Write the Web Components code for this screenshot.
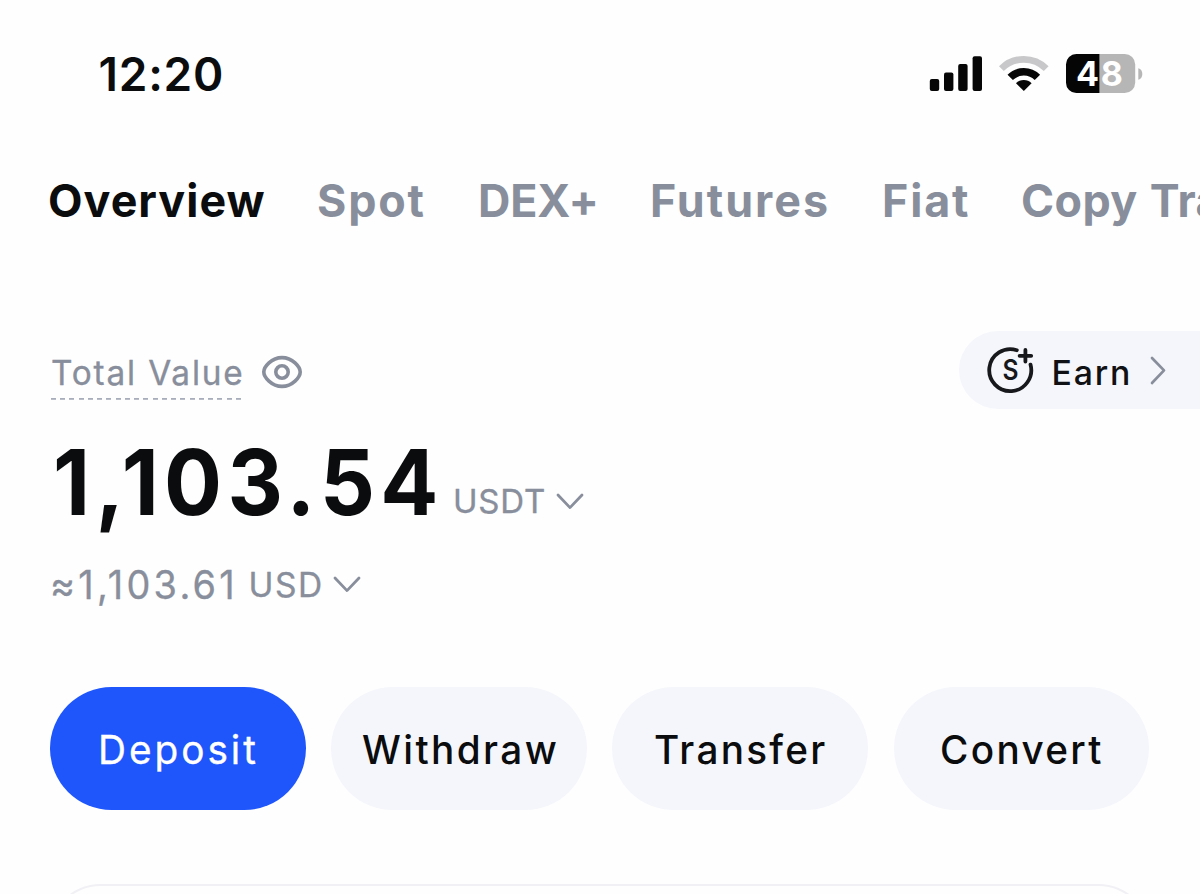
<!DOCTYPE html>
<html lang="en">
<head>
<meta charset="utf-8">
<title>Wallet overview</title>
<style>
html,body{margin:0;height:100%;overflow:hidden;background:#fefefe}
body{font-family:Inter,"Liberation Sans",sans-serif;color:#0b0c0e}
</style>
</head>
<body>
<wallet-app></wallet-app>
<script>
const define=(name,html,setup)=>{
  const tpl=document.createElement('template');
  tpl.innerHTML=html;
  customElements.define(name,class extends HTMLElement{
    connectedCallback(){
      if(this.shadowRoot)return;
      this.attachShadow({mode:'open'}).append(tpl.content.cloneNode(true));
      if(setup)setup(this,this.shadowRoot);
    }
  });
};
const ctx=document.createElement('canvas').getContext('2d');

/* One line of type: size, weight and horizontal scale, tracked so its ink spans the given width. */
define('type-line',`<style>
:host{display:block;flex:none;white-space:nowrap;line-height:1}
:host([firm]){-webkit-text-stroke:.35px currentColor}
span{display:block;width:max-content;transform-origin:0 0}
</style><span><slot></slot></span>`,(el,root)=>{
  const size=+el.getAttribute('size'),weight=el.getAttribute('weight')||400,text=el.textContent;
  const sx=+el.getAttribute('stretch')||1;
  const span=root.querySelector('span');
  el.style.cssText+=`;font-size:${size}px;font-weight:${weight};height:${size}px`;
  ctx.font=`${weight} ${size}px Inter`;
  const m=ctx.measureText(text);
  const ink=m.actualBoundingBoxLeft+m.actualBoundingBoxRight;
  const fit=el.getAttribute('fit');
  const track=fit?(fit/sx-ink)/Math.max(1,text.length-1):+el.getAttribute('track')||0;
  if(fit)el.style.width=fit+'px';
  span.style.letterSpacing=track+'px';
  span.style.marginLeft=m.actualBoundingBoxLeft*sx+'px';
  if(sx!==1)span.style.transform=`scaleX(${sx})`;
});

define('signal-icons',`<style>
:host{display:block;width:214px;height:40px}svg{display:block}text{font:700 34px Inter,sans-serif;fill:#fff}
</style>
<svg width="214" height="40" viewBox="929 54 214 40">
<g fill="#060606"><rect x="929.8" y="79" width="9.4" height="12" rx="2"/><rect x="944" y="72.6" width="9.4" height="18.4" rx="2"/><rect x="958.2" y="64" width="9.4" height="27" rx="2"/><rect x="972.6" y="56.2" width="9.4" height="34.8" rx="2"/></g>
<g fill="none" transform="translate(1023.8 91)"><path d="M-22.4-22.4A31.7 31.7 0 0 1 22.4-22.4" stroke="#c8c8ca" stroke-width="6.8"/><path d="M-13.6-13.6A19.2 19.2 0 0 1 13.6-13.6" stroke="#060606" stroke-width="7.6"/><path d="M0 0L-7.8-7.8A11 11 0 0 1 7.8-7.8Z" fill="#060606"/></g>
<rect x="1066" y="54" width="69.2" height="39" rx="10.5" fill="#b6b6b6"/>
<path d="M1099.4 54H1076.5A10.5 10.5 0 0 0 1066 64.5V82.5A10.5 10.5 0 0 0 1076.5 93H1099.4Z" fill="#050505"/>
<path d="M1138.3 68.3Q1142.3 69.5 1142.3 74T1138.3 79.7Z" fill="#b6b6b6"/>
<text x="1076" y="85.9" textLength="47">48</text>
</svg>`);

define('status-bar',`<style>
:host{display:flex;height:106px;padding:51.3px 57px 0 100.5px;box-sizing:border-box;justify-content:space-between}
signal-icons{margin-top:2.7px}
</style><type-line size="46" weight="600" fit="121.5">12:20</type-line><signal-icons></signal-icons>`);

define('account-tabs',`<style>
:host{display:flex;height:160px;padding:73px 0 0 50px;box-sizing:border-box;color:#888e9b;overflow:hidden}
type-line{margin-right:53.5px}
.on{color:#0b0c0e}
</style>
<type-line class="on" size="44.8" weight="700" fit="214.5">Overview</type-line>
<type-line size="44.8" weight="700" fit="105.5" style="margin-right:56.5px">Spot</type-line>
<type-line size="44.8" weight="700" fit="115.5" style="margin-right:56.5px">DEX+</type-line>
<type-line size="44.8" weight="700" fit="175" style="margin-right:57px">Futures</type-line>
<type-line size="44.8" weight="700" fit="84" style="margin-right:55px">Fiat</type-line>
<type-line size="44.8" weight="700" track=".4" style="word-spacing:1.2px">Copy Trading</type-line>`);

define('chevron-icon',`<style>:host{display:block;flex:none;width:28px;height:17px;color:#888e9b}svg{display:block}</style>
<svg width="28" height="17" fill="none" stroke="currentColor" stroke-width="2.8" stroke-linecap="round" stroke-linejoin="round"><path d="M2 2L14 14.6L26 2"/></svg>`);

define('eye-icon',`<style>:host{display:block;width:42px;height:34px}svg{display:block}</style>
<svg width="42" height="34" viewBox="0 0 42 34" fill="none" stroke="#888e9b" stroke-width="3.6"><path d="M2.8 17C2.8 12 10.5 2.6 21 2.6S39.2 12 39.2 17C39.2 22 31.5 31.4 21 31.4S2.8 22 2.8 17Z" stroke-linejoin="round"/><circle cx="21" cy="17" r="6.2"/></svg>`);

define('earn-link',`<style>
:host{display:flex;width:241px;height:78.5px;box-sizing:border-box;background:#f5f6fb;border-radius:40px 0 0 40px;padding-left:26px;color:#101114}
.coin{display:block;margin-top:13.5px;flex:none}
type-line{margin:25.2px 21.5px 0 17.5px}
.go{margin-top:25px}
text{font:600 28px Inter,sans-serif;fill:#17181b}
</style>
<svg class="coin" width="51" height="52" viewBox="985 344 51 52" fill="none" stroke="#17181b" stroke-width="3.8" stroke-linecap="round"><path d="M1016.8 350.2A21 21 0 1 0 1030.5 364.6"/><path d="M1019.6 355.8H1031.2M1025.4 350V361.6"/><text x="1010.4" y="380" text-anchor="middle" stroke="none" textLength="16" lengthAdjust="spacingAndGlyphs">S</text></svg>
<type-line size="33.8" weight="500" fit="74.5">Earn</type-line>
<svg class="go" width="17" height="30" fill="none" stroke="#888e9b" stroke-width="2.7" stroke-linecap="round" stroke-linejoin="round"><path d="M2 2L14 14.4L2 27"/></svg>`);

define('balance-panel',`<style>
:host{display:grid;grid-template-columns:1fr auto;height:421px;padding-top:64.5px;box-sizing:border-box;align-content:start}
.row{display:flex;grid-column:1/-1;color:#888e9b}
.label{grid-column:1;display:flex;padding:25.2px 0 0 50.5px;color:#888e9b;height:106.8px;box-sizing:border-box}
.term{width:190px;height:44.1px;padding-left:1.5px;box-sizing:border-box;background:repeating-linear-gradient(90deg,#a8adbb 0 5px,transparent 5px 9.25px) left bottom/100% 1.8px no-repeat}
eye-icon{margin:-.8px 0 0 20px}
.main{padding-left:57px;height:127px}
.big{color:#0b0c0e}
.main .unit{margin:47.9px 12px 0 19.5px}
.main chevron-icon{margin-top:55.4px}
.sub{padding-left:53px}
.sub .value{margin-top:.9px}
.sub .unit{margin:4.3px 11.5px 0 18.5px}
.sub chevron-icon{margin-top:11.4px}
</style>
<div class="label"><div class="term"><type-line firm size="34" stretch=".98" fit="190">Total Value</type-line></div><eye-icon></eye-icon></div>
<earn-link></earn-link>
<div class="row main"><type-line class="big" size="90.5" weight="700" stretch=".95" fit="378.5">1,103.54</type-line><type-line class="unit" firm size="33" fit="89">USDT</type-line><chevron-icon></chevron-icon></div>
<div class="row sub"><type-line class="value" firm size="39" stretch=".97" fit="179">≈1,103.61</type-line><type-line class="unit" firm size="33.5" fit="70.5">USD</type-line><chevron-icon></chevron-icon></div>`);

define('action-button',`<style>
:host{display:flex;justify-content:center;height:123px;background:#f5f6fb;border-radius:62px;padding-top:44px;box-sizing:border-box;color:#0b0c0e}
:host([primary]){background:#1e56fb;color:#fff}
</style><slot></slot>`);

define('action-row',`<style>
:host{display:grid;grid-template-columns:repeat(4,1fr);gap:25.7px;padding:0 51px 0 50.3px;height:197px;box-sizing:border-box}
</style>
<action-button primary><type-line firm size="39.5" stretch=".98" fit="155">Deposit</type-line></action-button>
<action-button><type-line size="39.5" weight="500" stretch=".98" fit="194">Withdraw</type-line></action-button>
<action-button><type-line size="39.5" weight="500" stretch=".98" fit="170">Transfer</type-line></action-button>
<action-button><type-line size="39.5" weight="500" stretch=".98" fit="159">Convert</type-line></action-button>`);

define('card-edge',`<style>:host{display:block;height:100px;margin:0 51px 0 50px;box-sizing:border-box;border:2px solid #f1f1f5;border-bottom:0;border-radius:50px 50px 0 0}</style>`);

define('wallet-app',`<style>:host{display:block;width:1200px;height:894px;overflow:hidden}</style>
<status-bar></status-bar><account-tabs></account-tabs><balance-panel></balance-panel><action-row></action-row><card-edge></card-edge>`);
</script>
</body>
</html>
